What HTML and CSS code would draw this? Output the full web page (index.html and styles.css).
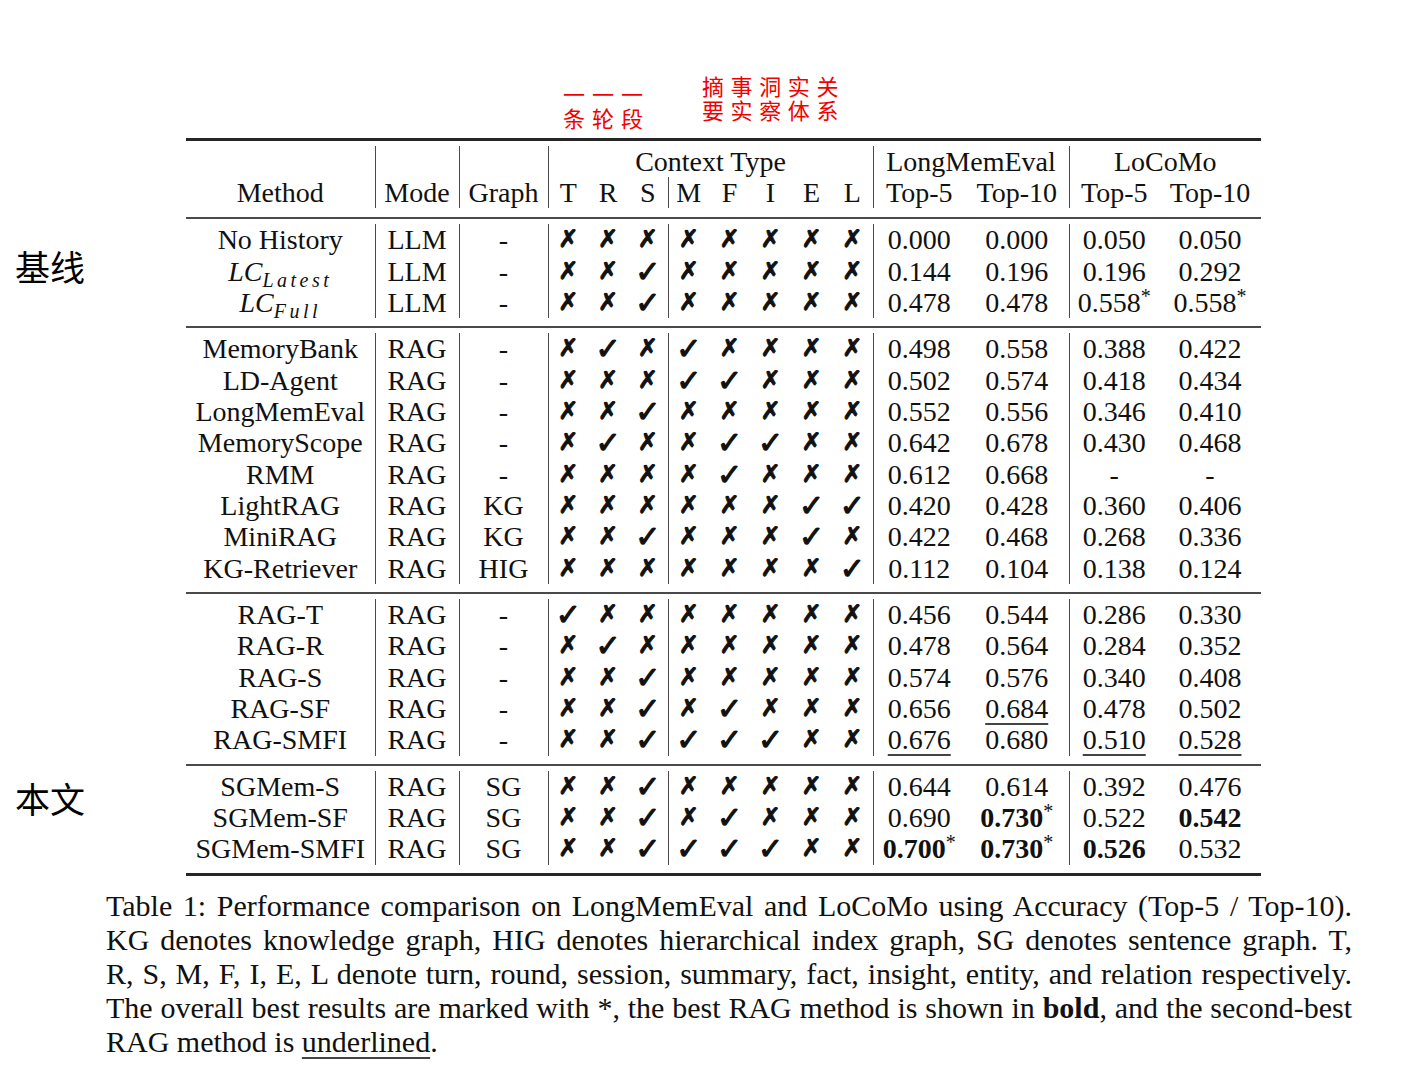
FILE: index.html
```html
<!DOCTYPE html>
<html lang="zh">
<head>
<meta charset="utf-8">
<title>Table 1</title>
<link rel="stylesheet" href="styles.css">
</head>
<body>
<div class="page">
  <div class="annots">
    <div class="ann ann-l">一一一<br>条轮段</div>
    <div class="ann ann-r">摘事洞实关<br>要实察体系</div>
  </div>
  <div class="main">
    <div class="side">
      <div class="lb lb1">基线</div>
      <div class="lb lb2">本文</div>
    </div>
    <table class="tbl">
      <colgroup>
        <col class="c-method"><col class="c-mode"><col class="c-graph">
        <col class="c-t"><col class="c-t"><col class="c-t">
        <col class="c-m"><col class="c-m"><col class="c-m"><col class="c-m"><col class="c-m">
        <col class="c-l5"><col class="c-l10"><col class="c-o5"><col class="c-o10">
      </colgroup>
      <tr class="sp sp-head rule-thick"><td colspan="15"></td></tr>
      <tr class="rh">
        <td rowspan="2" class="hb">Method</td>
        <td rowspan="2" class="hb bl">Mode</td>
        <td rowspan="2" class="hb bl">Graph</td>
        <td colspan="8" class="bl">Context Type</td>
        <td colspan="2" class="bl">LongMemEval</td>
        <td colspan="2" class="bl">LoCoMo</td>
      </tr>
      <tr class="rh">
        <td class="bl">T</td><td>R</td><td>S</td>
        <td class="bl">M</td><td>F</td><td>I</td><td>E</td><td>L</td>
        <td class="bl">Top-5</td><td>Top-10</td>
        <td class="bl">Top-5</td><td>Top-10</td>
      </tr>
      <tr class="sp sp-headbot"><td colspan="15"></td></tr>

      <tr class="sp sp-top rule"><td colspan="15"></td></tr>
      <tr class="r"><td>No History</td><td class="bl">LLM</td><td class="bl">-</td><td class="bl ck">✗</td><td class="ck">✗</td><td class="ck">✗</td><td class="bl ck">✗</td><td class="ck">✗</td><td class="ck">✗</td><td class="ck">✗</td><td class="ck">✗</td><td class="bl">0.000</td><td>0.000</td><td class="bl">0.050</td><td>0.050</td></tr>
      <tr class="r"><td><span class="m">LC<sub>Latest</sub></span></td><td class="bl">LLM</td><td class="bl">-</td><td class="bl ck">✗</td><td class="ck">✗</td><td class="ck ok">✓</td><td class="bl ck">✗</td><td class="ck">✗</td><td class="ck">✗</td><td class="ck">✗</td><td class="ck">✗</td><td class="bl">0.144</td><td>0.196</td><td class="bl">0.196</td><td>0.292</td></tr>
      <tr class="r"><td><span class="m">LC<sub>Full</sub></span></td><td class="bl">LLM</td><td class="bl">-</td><td class="bl ck">✗</td><td class="ck">✗</td><td class="ck ok">✓</td><td class="bl ck">✗</td><td class="ck">✗</td><td class="ck">✗</td><td class="ck">✗</td><td class="ck">✗</td><td class="bl">0.478</td><td>0.478</td><td class="bl">0.558<sup>*</sup></td><td>0.558<sup>*</sup></td></tr>
      <tr class="sp sp-bot"><td colspan="15"></td></tr>

      <tr class="sp sp-top rule"><td colspan="15"></td></tr>
      <tr class="r"><td>MemoryBank</td><td class="bl">RAG</td><td class="bl">-</td><td class="bl ck">✗</td><td class="ck ok">✓</td><td class="ck">✗</td><td class="bl ck ok">✓</td><td class="ck">✗</td><td class="ck">✗</td><td class="ck">✗</td><td class="ck">✗</td><td class="bl">0.498</td><td>0.558</td><td class="bl">0.388</td><td>0.422</td></tr>
      <tr class="r"><td>LD-Agent</td><td class="bl">RAG</td><td class="bl">-</td><td class="bl ck">✗</td><td class="ck">✗</td><td class="ck">✗</td><td class="bl ck ok">✓</td><td class="ck ok">✓</td><td class="ck">✗</td><td class="ck">✗</td><td class="ck">✗</td><td class="bl">0.502</td><td>0.574</td><td class="bl">0.418</td><td>0.434</td></tr>
      <tr class="r"><td>LongMemEval</td><td class="bl">RAG</td><td class="bl">-</td><td class="bl ck">✗</td><td class="ck">✗</td><td class="ck ok">✓</td><td class="bl ck">✗</td><td class="ck">✗</td><td class="ck">✗</td><td class="ck">✗</td><td class="ck">✗</td><td class="bl">0.552</td><td>0.556</td><td class="bl">0.346</td><td>0.410</td></tr>
      <tr class="r"><td>MemoryScope</td><td class="bl">RAG</td><td class="bl">-</td><td class="bl ck">✗</td><td class="ck ok">✓</td><td class="ck">✗</td><td class="bl ck">✗</td><td class="ck ok">✓</td><td class="ck ok">✓</td><td class="ck">✗</td><td class="ck">✗</td><td class="bl">0.642</td><td>0.678</td><td class="bl">0.430</td><td>0.468</td></tr>
      <tr class="r"><td>RMM</td><td class="bl">RAG</td><td class="bl">-</td><td class="bl ck">✗</td><td class="ck">✗</td><td class="ck">✗</td><td class="bl ck">✗</td><td class="ck ok">✓</td><td class="ck">✗</td><td class="ck">✗</td><td class="ck">✗</td><td class="bl">0.612</td><td>0.668</td><td class="bl">-</td><td>-</td></tr>
      <tr class="r"><td>LightRAG</td><td class="bl">RAG</td><td class="bl">KG</td><td class="bl ck">✗</td><td class="ck">✗</td><td class="ck">✗</td><td class="bl ck">✗</td><td class="ck">✗</td><td class="ck">✗</td><td class="ck ok">✓</td><td class="ck ok">✓</td><td class="bl">0.420</td><td>0.428</td><td class="bl">0.360</td><td>0.406</td></tr>
      <tr class="r"><td>MiniRAG</td><td class="bl">RAG</td><td class="bl">KG</td><td class="bl ck">✗</td><td class="ck">✗</td><td class="ck ok">✓</td><td class="bl ck">✗</td><td class="ck">✗</td><td class="ck">✗</td><td class="ck ok">✓</td><td class="ck">✗</td><td class="bl">0.422</td><td>0.468</td><td class="bl">0.268</td><td>0.336</td></tr>
      <tr class="r"><td>KG-Retriever</td><td class="bl">RAG</td><td class="bl">HIG</td><td class="bl ck">✗</td><td class="ck">✗</td><td class="ck">✗</td><td class="bl ck">✗</td><td class="ck">✗</td><td class="ck">✗</td><td class="ck">✗</td><td class="ck ok">✓</td><td class="bl">0.112</td><td>0.104</td><td class="bl">0.138</td><td>0.124</td></tr>
      <tr class="sp sp-bot"><td colspan="15"></td></tr>

      <tr class="sp sp-top rule"><td colspan="15"></td></tr>
      <tr class="r"><td>RAG-T</td><td class="bl">RAG</td><td class="bl">-</td><td class="bl ck ok">✓</td><td class="ck">✗</td><td class="ck">✗</td><td class="bl ck">✗</td><td class="ck">✗</td><td class="ck">✗</td><td class="ck">✗</td><td class="ck">✗</td><td class="bl">0.456</td><td>0.544</td><td class="bl">0.286</td><td>0.330</td></tr>
      <tr class="r"><td>RAG-R</td><td class="bl">RAG</td><td class="bl">-</td><td class="bl ck">✗</td><td class="ck ok">✓</td><td class="ck">✗</td><td class="bl ck">✗</td><td class="ck">✗</td><td class="ck">✗</td><td class="ck">✗</td><td class="ck">✗</td><td class="bl">0.478</td><td>0.564</td><td class="bl">0.284</td><td>0.352</td></tr>
      <tr class="r"><td>RAG-S</td><td class="bl">RAG</td><td class="bl">-</td><td class="bl ck">✗</td><td class="ck">✗</td><td class="ck ok">✓</td><td class="bl ck">✗</td><td class="ck">✗</td><td class="ck">✗</td><td class="ck">✗</td><td class="ck">✗</td><td class="bl">0.574</td><td>0.576</td><td class="bl">0.340</td><td>0.408</td></tr>
      <tr class="r"><td>RAG-SF</td><td class="bl">RAG</td><td class="bl">-</td><td class="bl ck">✗</td><td class="ck">✗</td><td class="ck ok">✓</td><td class="bl ck">✗</td><td class="ck ok">✓</td><td class="ck">✗</td><td class="ck">✗</td><td class="ck">✗</td><td class="bl">0.656</td><td><span class="ul">0.684</span></td><td class="bl">0.478</td><td>0.502</td></tr>
      <tr class="r"><td>RAG-SMFI</td><td class="bl">RAG</td><td class="bl">-</td><td class="bl ck">✗</td><td class="ck">✗</td><td class="ck ok">✓</td><td class="bl ck ok">✓</td><td class="ck ok">✓</td><td class="ck ok">✓</td><td class="ck">✗</td><td class="ck">✗</td><td class="bl"><span class="ul">0.676</span></td><td>0.680</td><td class="bl"><span class="ul">0.510</span></td><td><span class="ul">0.528</span></td></tr>
      <tr class="sp sp-bot"><td colspan="15"></td></tr>

      <tr class="sp sp-top rule"><td colspan="15"></td></tr>
      <tr class="r"><td>SGMem-S</td><td class="bl">RAG</td><td class="bl">SG</td><td class="bl ck">✗</td><td class="ck">✗</td><td class="ck ok">✓</td><td class="bl ck">✗</td><td class="ck">✗</td><td class="ck">✗</td><td class="ck">✗</td><td class="ck">✗</td><td class="bl">0.644</td><td>0.614</td><td class="bl">0.392</td><td>0.476</td></tr>
      <tr class="r"><td>SGMem-SF</td><td class="bl">RAG</td><td class="bl">SG</td><td class="bl ck">✗</td><td class="ck">✗</td><td class="ck ok">✓</td><td class="bl ck">✗</td><td class="ck ok">✓</td><td class="ck">✗</td><td class="ck">✗</td><td class="ck">✗</td><td class="bl">0.690</td><td><b>0.730</b><sup>*</sup></td><td class="bl">0.522</td><td><b>0.542</b></td></tr>
      <tr class="r"><td>SGMem-SMFI</td><td class="bl">RAG</td><td class="bl">SG</td><td class="bl ck">✗</td><td class="ck">✗</td><td class="ck ok">✓</td><td class="bl ck ok">✓</td><td class="ck ok">✓</td><td class="ck ok">✓</td><td class="ck">✗</td><td class="ck">✗</td><td class="bl"><b>0.700</b><sup>*</sup></td><td><b>0.730</b><sup>*</sup></td><td class="bl"><b>0.526</b></td><td>0.532</td></tr>
      <tr class="sp sp-bot rule-bottom"><td colspan="15"></td></tr>
    </table>
  </div>
  <div class="cap">
    <span class="ln">Table 1: Performance comparison on LongMemEval and LoCoMo using Accuracy (Top-5 / Top-10).</span>
    <span class="ln">KG denotes knowledge graph, HIG denotes hierarchical index graph, SG denotes sentence graph. T,</span>
    <span class="ln">R, S, M, F, I, E, L denote turn, round, session, summary, fact, insight, entity, and relation respectively.</span>
    <span class="ln">The overall best results are marked with *, the best RAG method is shown in <b>bold</b>, and the second-best</span>
    <span class="ln last">RAG method is <span class="ul">underlined</span>.</span>
  </div>
</div>
</body>
</html>
```

FILE: styles.css
```css
body {
  margin: 0;
  background: #ffffff;
  color: #111111;
  font-family: "Liberation Serif", "Times New Roman", serif;
}

.page {
  width: 1424px;
}

.annots {
  height: 138px;
  display: flex;
  align-items: flex-start;
  padding-left: 563px;
  font-family: "Noto Sans CJK SC", "Noto Sans", sans-serif;
  color: #f20000;
  font-size: 22px;
  line-height: 24px;
}

.ann-l {
  margin-top: 81px;
  letter-spacing: 7px;
}

.ann-r {
  margin-top: 73px;
  margin-left: 52px;
  letter-spacing: 6.6px;
}

.main {
  display: flex;
  align-items: flex-start;
}

.side {
  width: 186px;
  flex: none;
  box-sizing: border-box;
  padding-left: 15px;
  font-family: "Noto Sans CJK SC", "Noto Sans", sans-serif;
  font-size: 35px;
  line-height: 50px;
  color: #000;
}

.lb1 { margin-top: 103px; }
.lb2 { margin-top: 482px; }

.tbl {
  border-collapse: collapse;
  table-layout: fixed;
  width: 1075px;
  font-size: 28px;
  color: #111;
}

.c-method { width: 189px; }
.c-mode { width: 84px; }
.c-graph { width: 89px; }
.c-t { width: 40px; }
.c-m { width: 41px; }
.c-l5 { width: 92px; }
.c-l10 { width: 104px; }
.c-o5 { width: 90px; }
.c-o10 { width: 102px; }

.tbl td {
  padding: 0;
  text-align: center;
  white-space: nowrap;
}

.r td {
  height: 31.35px;
  line-height: 31px;
}

.rh td {
  height: 31px;
  line-height: 31px;
}

.hb { vertical-align: bottom; }

.bl { border-left: 1px solid #4a4a4a; }

.sp td {
  font-size: 0;
  line-height: 0;
}

.sp-head td { height: 5px; }
.sp-headbot td { height: 9px; }
.sp-top td { height: 5px; }
.sp-bot td { height: 8px; }

.rule-thick td { border-top: 3px solid #262626; }
.rule td { border-top: 2px solid #4a4a4a; }
.rule-bottom td { border-bottom: 3px solid #262626; }

.ck {
  font-family: "DejaVu Sans", sans-serif;
  font-size: 24px;
  -webkit-text-stroke: 1px #111;
}

.ck.ok {
  font-size: 30px;
  -webkit-text-stroke: 1.2px #111;
}

.m {
  font-style: italic;
}

.m sub {
  font-size: 20px;
  letter-spacing: 3.5px;
  vertical-align: -6px;
  line-height: 0;
}

sup {
  font-size: 20px;
  line-height: 0;
  vertical-align: 9px;
}

.ul {
  text-decoration: underline;
  text-decoration-thickness: 1.5px;
  text-underline-offset: 5px;
  text-decoration-color: #444;
}

.cap {
  margin: 13px 0 0 106px;
  width: 1246px;
  font-size: 30px;
  line-height: 34px;
  color: #111;
}

.ln {
  display: block;
  text-align: justify;
  text-align-last: justify;
}

.ln.last {
  text-align: left;
  text-align-last: left;
}
```
